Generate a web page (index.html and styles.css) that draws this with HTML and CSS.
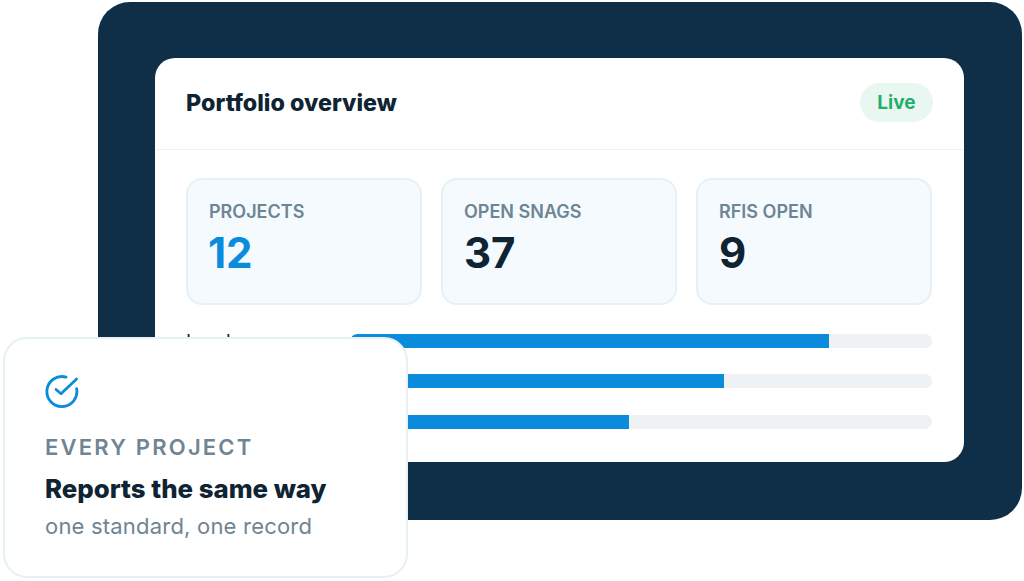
FILE: index.html
```html
<!DOCTYPE html>
<html lang="en">
<head>
<meta charset="utf-8">
<title>Portfolio overview</title>
<link rel="stylesheet" href="styles.css">
</head>
<body>
<main class="stage">
  <section class="frame">
    <div class="card">
      <header class="card-head">
        <h1 class="card-title">Portfolio overview</h1>
        <span class="badge">Live</span>
      </header>
      <div class="card-body">
        <div class="stats">
          <div class="stat"><div class="stat-label">PROJECTS</div><div class="stat-value accent">12</div></div>
          <div class="stat"><div class="stat-label">OPEN SNAGS</div><div class="stat-value">37</div></div>
          <div class="stat"><div class="stat-label">RFIS OPEN</div><div class="stat-value">9</div></div>
        </div>
        <div class="bars">
          <div class="bar-row"><span class="bar-label">Leeds</span><div class="track"><div class="fill" style="width:82.3%"></div></div></div>
          <div class="bar-row"><span class="bar-label">York</span><div class="track"><div class="fill" style="width:64.3%"></div></div></div>
          <div class="bar-row"><span class="bar-label">Hull</span><div class="track"><div class="fill" style="width:48%"></div></div></div>
        </div>
      </div>
    </div>
  </section>
  <aside class="float">
    <svg class="float-icon" width="34" height="34" viewBox="0 0 34 34" fill="none" aria-hidden="true">
      <path d="M31.6 14.6A15 15 0 1 1 21 3.1" stroke="#0a8bdc" stroke-width="2.8" stroke-linecap="round"/>
      <path d="M11 15.5l5 4.2L31.6 5" stroke="#0a8bdc" stroke-width="2.8" stroke-linecap="round" stroke-linejoin="round"/>
    </svg>
    <div class="float-kicker">EVERY PROJECT</div>
    <div class="float-title">Reports the same way</div>
    <div class="float-sub">one standard, one record</div>
  </aside>
</main>
</body>
</html>
```
FILE: styles.css
```css
* { box-sizing: border-box; }
html, body { margin: 0; padding: 0; background: #fff; }
body { font-family: Inter, "Liberation Sans", sans-serif; color: #0f2433; overflow: hidden; }
.stage { position: relative; width: 1024px; height: 581px; padding: 2px 2px 0 98px; }
.frame { height: 518px; background: #0f2e47; border-radius: 32px; padding: 56px 58px 58px 57px; }
.card { height: 404px; background: #fff; border-radius: 20px; overflow: hidden; }
.card-head { height: 92px; display: flex; align-items: center; justify-content: space-between; padding: 0 31px 2px 31px; border-bottom: 1px solid #eef2f4; }
.card-title { margin: 0; font-size: 23.3px; font-weight: 800; line-height: 1.2; }
.badge { width: 73px; height: 39px; border-radius: 20px; background: #e8f8f0; color: #1fae6e; font-size: 19px; font-weight: 700; display: flex; align-items: center; justify-content: center; }
.card-body { padding: 28px 32px 0 31px; }
.stats { display: grid; grid-template-columns: repeat(3, 1fr); gap: 19px; }
.stat { height: 127px; background: #f4fafe; border: 2px solid #e6f1f6; border-radius: 16px; padding: 21px 21px 0; }
.stat-label { font-size: 18px; font-weight: 600; line-height: 21px; color: #6f8593; }
.stat-value { margin-top: 6px; font-size: 42px; font-weight: 700; line-height: 50px; }
.accent { color: #0a8bdc; margin-left: -1px; }
.bars { margin-top: 29px; display: flex; flex-direction: column; gap: 26.4px; }
.bar-row { height: 14px; display: flex; align-items: center; }
.bar-label { width: 164px; font-size: 19px; color: #0f2433; }
.track { flex: 1; height: 14px; background: #eff2f4; border-radius: 7px; overflow: hidden; }
.fill { height: 100%; background: #0a8bdc; border-radius: 7px 0 0 7px; }
.float { position: absolute; left: 3px; top: 337px; width: 405px; height: 241px; background: #fff; border: 2px solid #e6f1f5; border-radius: 24px; padding: 35px 40px 0; }
.float-icon { display: block; }
.float-kicker { margin-top: 26px; font-size: 22px; font-weight: 600; letter-spacing: 2.2px; line-height: 26px; color: #6f8593; }
.float-title { margin-top: 13px; font-size: 25.8px; font-weight: 800; line-height: 32px; color: #0f2433; }
.float-sub { margin-top: 8px; font-size: 22px; font-weight: 400; letter-spacing: 0.2px; line-height: 26px; color: #6f8593; }
```
